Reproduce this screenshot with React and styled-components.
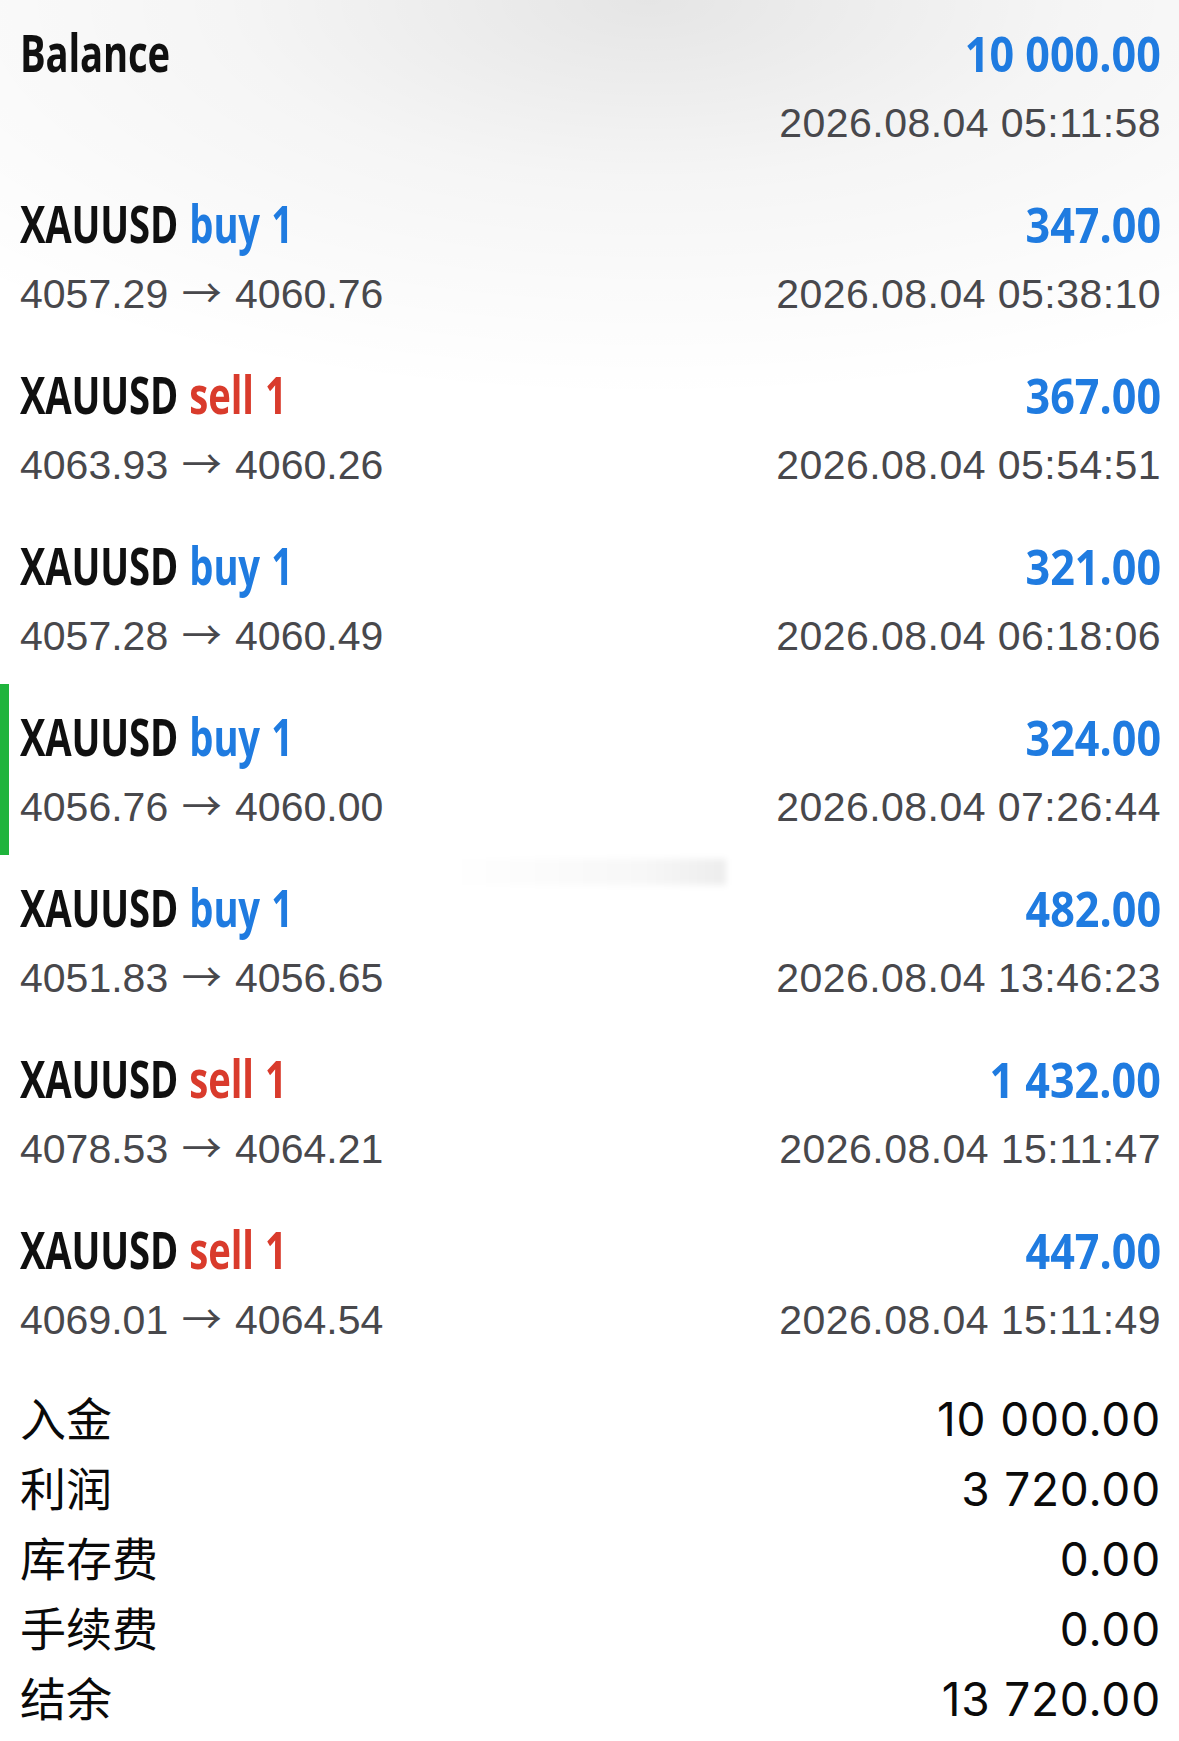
import React from 'react';
import styled, { createGlobalStyle } from 'styled-components';

const GlobalStyle = createGlobalStyle`
  html, body {
    margin: 0;
    padding: 0;
    background: #ffffff;
  }
  * {
    box-sizing: border-box;
  }
`;

const Page = styled.div`
  position: relative;
  width: 1179px;
  min-height: 1741px;
  background:
    radial-gradient(ellipse 950px 400px at 55% 0%, rgba(0, 0, 0, 0.1) 0%, rgba(0, 0, 0, 0.04) 45%, rgba(0, 0, 0, 0) 100%),
    #ffffff;
  overflow: hidden;
`;

const Row = styled.div`
  height: 171px;
  padding: 20px 18px 0 ${(p) => (p.selected ? '11px' : '20px')};
  border-left: ${(p) => (p.selected ? '9px solid #1fb43c' : 'none')};
  display: flex;
  flex-direction: column;
`;

const TopLine = styled.div`
  display: flex;
  justify-content: space-between;
  align-items: baseline;
  line-height: 64px;
  height: 64px;
`;

const BottomLine = styled.div`
  display: flex;
  justify-content: space-between;
  align-items: baseline;
  line-height: 78px;
  height: 78px;
  font-family: 'Liberation Sans', Arial, sans-serif;
  font-size: 41px;
  color: #48484c;
`;

const Time = styled.span`
  letter-spacing: 0.45px;
`;

const Title = styled.span`
  display: inline-block;
  white-space: nowrap;
  font-family: 'Open Sans', 'Liberation Sans', sans-serif;
  font-weight: 700;
  font-size: 52px;
  color: #101010;
  transform: scaleX(0.735);
  transform-origin: left center;
  letter-spacing: -0.2px;
  word-spacing: 2px;
`;

const Side = styled.span`
  color: ${(p) => (p.type === 'sell' ? '#d93b2c' : '#1f7be0')};
`;

const Amount = styled.span`
  display: inline-block;
  white-space: nowrap;
  font-family: 'Open Sans', 'Liberation Sans', sans-serif;
  font-weight: 700;
  font-size: 49px;
  color: #1f7be0;
  transform: scaleX(0.88);
  transform-origin: right center;
`;

const Arrow = styled.span`
  font-family: 'Noto Sans CJK SC', 'DejaVu Sans', sans-serif;
  font-size: 40px;
  line-height: 0;
  margin: 0 2px;
`;

const Summary = styled.div`
  padding: 13px 18px 0 20px;
`;

const SummaryRow = styled.div`
  display: flex;
  justify-content: space-between;
  align-items: baseline;
  height: 70px;
`;

const Label = styled.span`
  font-family: 'Noto Sans CJK SC', 'Noto Sans', sans-serif;
  font-size: 46px;
  line-height: 70px;
  color: #0a0a0a;
`;

const Value = styled.span`
  font-family: Inter, 'Liberation Sans', sans-serif;
  font-size: 46px;
  line-height: 70px;
  color: #0a0a0a;
  letter-spacing: 0.8px;
`;

const Smudge = styled.div`
  position: absolute;
  left: 450px;
  top: 859px;
  width: 276px;
  height: 26px;
  background: linear-gradient(to right, rgba(0, 0, 0, 0), rgba(0, 0, 0, 0.03) 70%, rgba(0, 0, 0, 0.07));
  filter: blur(3px);
  pointer-events: none;
`;

const trades = [
  { side: 'buy', amount: '347.00', from: '4057.29', to: '4060.76', time: '2026.08.04 05:38:10' },
  { side: 'sell', amount: '367.00', from: '4063.93', to: '4060.26', time: '2026.08.04 05:54:51' },
  { side: 'buy', amount: '321.00', from: '4057.28', to: '4060.49', time: '2026.08.04 06:18:06' },
  { side: 'buy', amount: '324.00', from: '4056.76', to: '4060.00', time: '2026.08.04 07:26:44', selected: true },
  { side: 'buy', amount: '482.00', from: '4051.83', to: '4056.65', time: '2026.08.04 13:46:23' },
  { side: 'sell', amount: '1 432.00', from: '4078.53', to: '4064.21', time: '2026.08.04 15:11:47' },
  { side: 'sell', amount: '447.00', from: '4069.01', to: '4064.54', time: '2026.08.04 15:11:49' },
];

const totals = [
  { label: '入金', value: '10 000.00' },
  { label: '利润', value: '3 720.00' },
  { label: '库存费', value: '0.00' },
  { label: '手续费', value: '0.00' },
  { label: '结余', value: '13 720.00' },
];

export default function App() {
  return (
    <Page>
      <GlobalStyle />

      <Row>
        <TopLine>
          <Title>Balance</Title>
          <Amount>10 000.00</Amount>
        </TopLine>
        <BottomLine>
          <span />
          <Time>2026.08.04 05:11:58</Time>
        </BottomLine>
      </Row>

      {trades.map((t, i) => (
        <Row key={i} selected={t.selected}>
          <TopLine>
            <Title>
              XAUUSD <Side type={t.side}>{t.side} 1</Side>
            </Title>
            <Amount>{t.amount}</Amount>
          </TopLine>
          <BottomLine>
            <span>
              {t.from} <Arrow>→</Arrow> {t.to}
            </span>
            <Time>{t.time}</Time>
          </BottomLine>
        </Row>
      ))}

      <Summary>
        {totals.map((row) => (
          <SummaryRow key={row.label}>
            <Label>{row.label}</Label>
            <Value>{row.value}</Value>
          </SummaryRow>
        ))}
      </Summary>

      <Smudge />
    </Page>
  );
}
